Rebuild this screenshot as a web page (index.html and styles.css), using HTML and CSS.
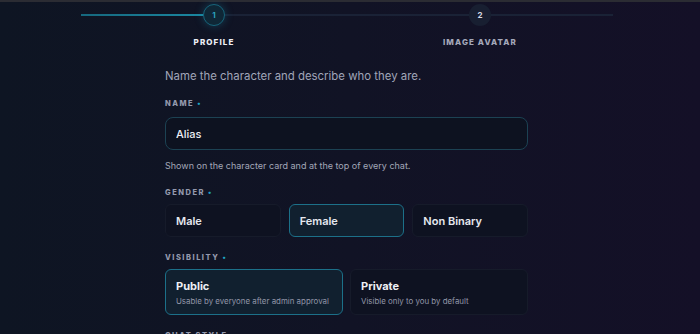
FILE: index.html
```html
<!DOCTYPE html>
<html lang="en">
<head>
  <meta charset="UTF-8">
  <meta name="viewport" content="width=device-width, initial-scale=1.0">
  <title>New Character</title>
  <link rel="stylesheet" href="styles.css">
</head>
<body>

<div class="topbar"></div>

<div class="stepper">
  <div class="step active">
    <span class="step-num">1</span>
    <span class="step-label">PROFILE</span>
  </div>
  <div class="step">
    <span class="step-num">2</span>
    <span class="step-label">IMAGE AVATAR</span>
  </div>
</div>

<form class="form">
  <p class="intro">Name the character and describe who they are.</p>

  <div class="field">
    <label class="field-label" for="name">NAME <span class="req">•</span></label>
    <input class="text-input" type="text" id="name" value="Alias">
    <small class="hint">Shown on the character card and at the top of every chat.</small>
  </div>

  <div class="field">
    <span class="field-label tight">GENDER <span class="req">•</span></span>
    <div class="options three">
      <button type="button" class="option">Male</button>
      <button type="button" class="option selected">Female</button>
      <button type="button" class="option">Non Binary</button>
    </div>
  </div>

  <div class="field">
    <span class="field-label tight">VISIBILITY <span class="req">•</span></span>
    <div class="options two">
      <button type="button" class="card selected">
        <span class="card-title">Public</span>
        <span class="card-desc">Usable by everyone after admin approval</span>
      </button>
      <button type="button" class="card">
        <span class="card-title">Private</span>
        <span class="card-desc">Visible only to you by default</span>
      </button>
    </div>
  </div>

  <div class="field">
    <span class="field-label">CHAT STYLE <span class="req">•</span></span>
  </div>
</form>

</body>
</html>
```

FILE: styles.css
```css
* {
  box-sizing: border-box;
}
body {
  margin: 0;
  height: 334px;
  overflow: hidden;
  font-family: Inter, "Noto Sans", sans-serif;
  color: #e4e6ee;
  background: linear-gradient(90deg, #0e1523 0%, #111325 50%, #141027 100%);
}
.topbar {
  height: 2px;
  background-color: #2b2c33;
}

/* stepper */
.stepper {
  position: relative;
  width: 532px;
  margin-left: 81px;
  padding-top: 2px;
  display: grid;
  grid-template-columns: 1fr 1fr;
}
.stepper::before,
.stepper::after {
  content: "";
  position: absolute;
  left: 0;
  top: 12px;
  height: 2px;
}
.stepper::before {
  width: 100%;
  background-color: #1a2236;
}
.stepper::after {
  width: 133px;
  background: linear-gradient(90deg, #16687e, #1b8aa4);
}
.step {
  position: relative;
  z-index: 1;
  display: flex;
  flex-direction: column;
  align-items: center;
}
.step-num {
  width: 22px;
  height: 22px;
  border-radius: 50%;
  display: flex;
  align-items: center;
  justify-content: center;
  font-size: 8px;
  font-weight: 700;
  background-color: #181f31;
  color: #d6d9e4;
}
.step.active .step-num {
  background-color: #0f2736;
  border: 1.5px solid #17647a;
  color: #2aa3bf;
  box-shadow: 0 0 8px rgba(30, 140, 170, 0.35);
}
.step-label {
  margin-top: 10px;
  font-size: 8px;
  line-height: 12px;
  font-weight: 800;
  letter-spacing: 1.1px;
  color: #a4a8ba;
}
.step.active .step-label {
  color: #eef0f6;
}

/* form */
.form {
  width: 363px;
  margin: 20px 0 0 165px;
}
.intro {
  margin: 0 0 15px;
  font-size: 11.4px;
  line-height: 16px;
  color: #a0a5b8;
}
.field {
  margin-bottom: 16px;
}
.field-label {
  display: block;
  margin-bottom: 8px;
  font-size: 7.5px;
  line-height: 10px;
  font-weight: 800;
  letter-spacing: 1.5px;
  color: #9499ad;
}
.field-label.tight {
  margin-bottom: 6px;
}
.req {
  color: #1fa6c6;
  letter-spacing: 0;
}
.text-input {
  display: block;
  width: 100%;
  height: 33px;
  padding: 0 10px;
  border: 1px solid #1c4253;
  border-radius: 8px;
  background-color: #0d1220;
  color: #eceef4;
  font-family: inherit;
  font-size: 11px;
  font-weight: 500;
  outline: none;
}
.hint {
  display: block;
  margin-top: 10px;
  font-size: 9px;
  line-height: 12px;
  color: #a3a7b8;
}
.options {
  display: grid;
  gap: 8px;
}
.options.three {
  grid-template-columns: repeat(3, 1fr);
}
.options.two {
  grid-template-columns: 1fr 1fr;
  gap: 7px;
}
.option,
.card {
  font-family: inherit;
  text-align: left;
  border: 1px solid #161b2a;
  border-radius: 6px;
  background-color: #0e1221;
  color: #e6e8ef;
  cursor: pointer;
}
.option {
  height: 33px;
  padding: 0 10px;
  font-size: 11px;
  font-weight: 600;
}
.option.selected,
.card.selected {
  border-color: #1c7089;
  background-color: #11202f;
}
.card {
  height: 46px;
  padding: 0 10px;
  display: flex;
  flex-direction: column;
  justify-content: center;
  gap: 3px;
}
.card-title {
  font-size: 11px;
  font-weight: 700;
  color: #eef0f5;
}
.card-desc {
  font-size: 7.9px;
  white-space: nowrap;
  color: #9296a8;
}
```
